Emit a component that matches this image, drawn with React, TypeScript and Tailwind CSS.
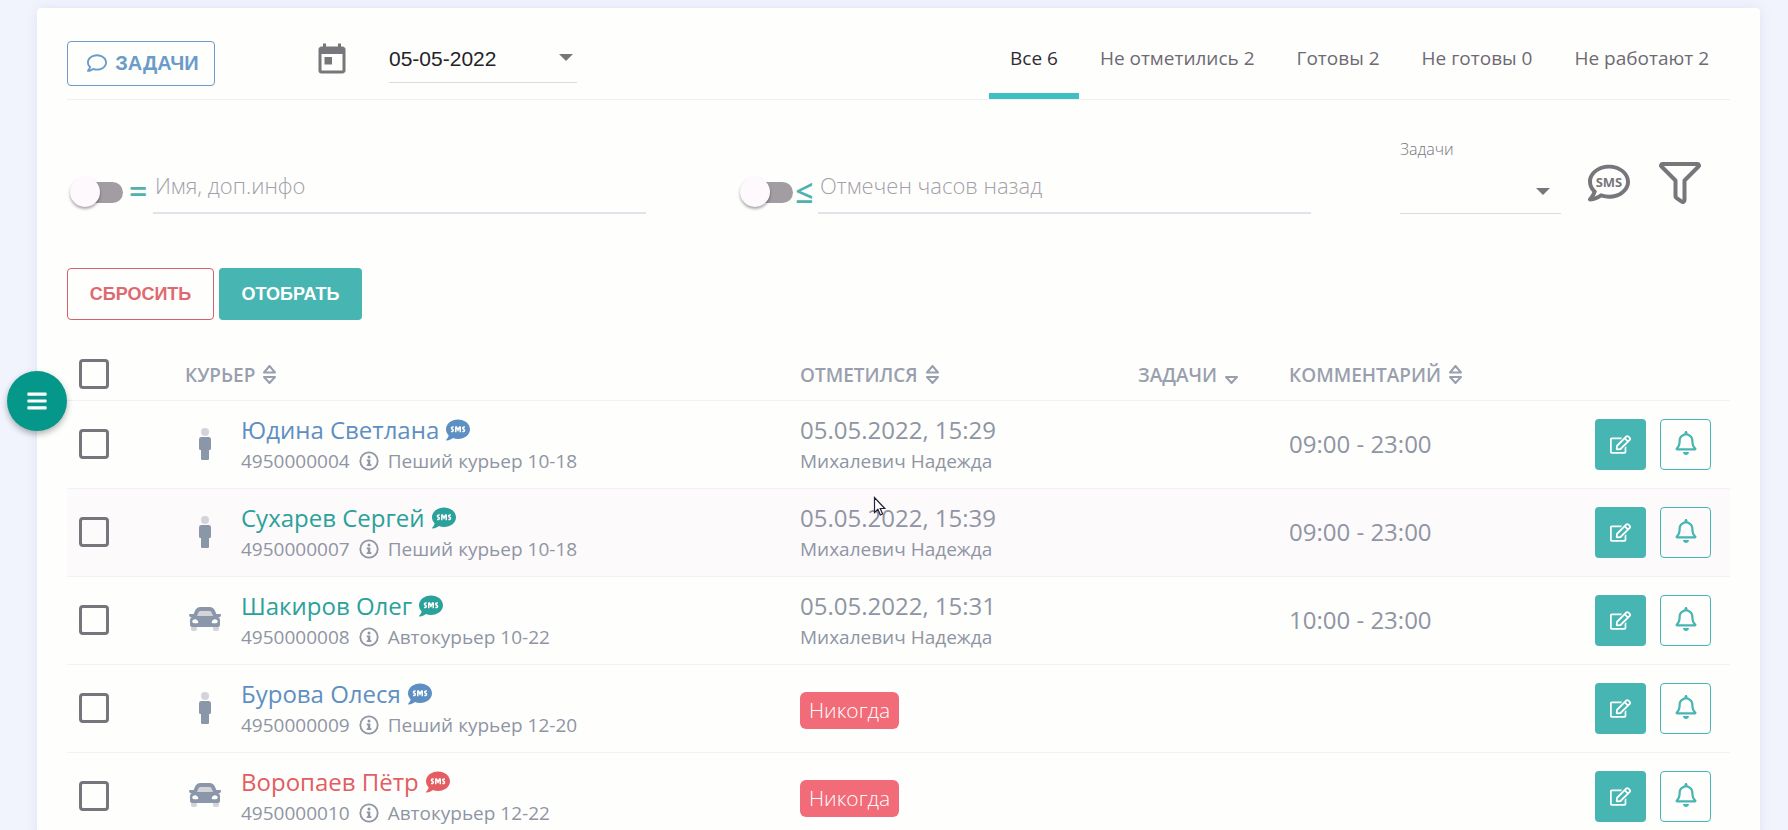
import { useState } from 'react'
import { FaBars, FaRegBell, FaRegComment, FaRegEdit, FaSms } from 'react-icons/fa'
import { MdToday } from 'react-icons/md'

interface Courier {
  name: string
  phone: string
  info: string
  kind: 'walk' | 'car'
  tone: 'blue' | 'teal' | 'red'
  checkedAt?: string
  checkedBy?: string
  comment?: string
}

const couriers: Courier[] = [
  { name: 'Юдина Светлана', phone: '4950000004', info: 'Пеший курьер 10-18', kind: 'walk', tone: 'blue', checkedAt: '05.05.2022, 15:29', checkedBy: 'Михалевич Надежда', comment: '09:00 - 23:00' },
  { name: 'Сухарев Сергей', phone: '4950000007', info: 'Пеший курьер 10-18', kind: 'walk', tone: 'teal', checkedAt: '05.05.2022, 15:39', checkedBy: 'Михалевич Надежда', comment: '09:00 - 23:00' },
  { name: 'Шакиров Олег', phone: '4950000008', info: 'Автокурьер 10-22', kind: 'car', tone: 'teal', checkedAt: '05.05.2022, 15:31', checkedBy: 'Михалевич Надежда', comment: '10:00 - 23:00' },
  { name: 'Бурова Олеся', phone: '4950000009', info: 'Пеший курьер 12-20', kind: 'walk', tone: 'blue' },
  { name: 'Воропаев Пётр', phone: '4950000010', info: 'Автокурьер 12-22', kind: 'car', tone: 'red' },
]

const tabs = ['Все 6', 'Не отметились 2', 'Готовы 2', 'Не готовы 0', 'Не работают 2']

const tones = {
  blue: 'text-[#5e8fc2]',
  teal: 'text-[#2aa19b]',
  red: 'text-[#e35d62]',
}

function Caret({ className }: { className: string }) {
  return (
    <svg className={className} width="14" height="7" viewBox="0 0 14 7" fill="currentColor">
      <path d="M0 0h14L7 7z" />
    </svg>
  )
}

function SortIcon({ single = false }: { single?: boolean }) {
  return (
    <svg width="13" height="19" viewBox="0 0 13 19" fill="none" stroke="currentColor" strokeWidth="2" strokeLinejoin="round">
      {!single && <path d="M1 7.5h11L6.5 1z" />}
      <path d="M1 12h11l-5.5 6z" />
    </svg>
  )
}

function InfoIcon() {
  return (
    <svg width="20" height="20" viewBox="0 0 20 20" fill="none">
      <circle cx="10" cy="10" r="8.7" stroke="currentColor" strokeWidth="1.8" />
      <circle cx="10" cy="5.9" r="1.5" fill="currentColor" />
      <path d="M7.7 8.6h3.6v4.6h1.1v1.7H7.7v-1.7h1.1v-2.9H7.7z" fill="currentColor" />
    </svg>
  )
}

function WalkIcon() {
  return (
    <svg width="32" height="32" viewBox="0 0 32 32">
      <circle cx="16" cy="4" r="4" fill="#d3d3d9" />
      <path d="M12.4 9h7.2a2.4 2.4 0 0 1 2.4 2.4v9a1.6 1.6 0 0 1-1.6 1.6H20v8.8a1.2 1.2 0 0 1-1.2 1.2h-5.6a1.2 1.2 0 0 1-1.2-1.2V22h-.4a1.6 1.6 0 0 1-1.6-1.6v-9A2.4 2.4 0 0 1 12.4 9z" fill="#8997a8" />
    </svg>
  )
}

function CarIcon() {
  return (
    <svg width="32" height="32" viewBox="0 1 32 32">
      <rect x="2" y="23" width="6" height="5" rx="2" fill="#d3d3d9" />
      <rect x="24" y="23" width="6" height="5" rx="2" fill="#d3d3d9" />
      <path d="M8 13l1.4-4.2C10 7.3 11 7 12 7h8c1 0 2 .3 2.6 1.8L24 13z" fill="#d3d3d9" />
      <path
        fillRule="evenodd"
        d="M11.5 4h9a6 6 0 0 1 5.5 3.8L27.3 11H31a1 1 0 0 1 1 1.2l-.4 1a1 1 0 0 1-1 .8h-1.2A4 4 0 0 1 31 17v5a2 2 0 0 1-2 2H3a2 2 0 0 1-2-2v-5a4 4 0 0 1 1.6-3H1.4a1 1 0 0 1-1-.8l-.3-1A1 1 0 0 1 1 11h3.7L6 7.8A6 6 0 0 1 11.5 4zM8 13h16l-1.7-4.1A2 2 0 0 0 20.5 8h-9a2 2 0 0 0-1.8.9zM6.2 16.3c-1.9 0-2.9 1-2.9 2.1S4.3 20.3 6.2 20.3s3.1-.1 3.1-1.1-1.8-2.9-3.1-2.9zm19.6 0c-1.3 0-3.1 1.9-3.1 2.9s1.2 1.1 3.1 1.1 2.9-.8 2.9-1.9-1-2.1-2.9-2.1z"
        fill="#8997a8"
      />
    </svg>
  )
}

function FilterIcon() {
  return (
    <svg width="42" height="42" viewBox="0 0 42 42" fill="none" stroke="currentColor" strokeWidth="4" strokeLinejoin="round">
      <path d="M3.5 2h35c1.3 0 2 1.6 1 2.5L25.5 18.5V38c0 1.5-1.5 2.4-2.7 1.6l-5.5-3.8c-.5-.4-.8-.9-.8-1.5V18.5L2.5 4.5C1.5 3.6 2.2 2 3.5 2z" />
    </svg>
  )
}

function Checkbox({ label }: { label: string }) {
  return (
    <input
      type="checkbox"
      aria-label={label}
      className="block size-[30px] appearance-none rounded-sm border-3 border-[#76757b] checked:bg-[#47b5b1]"
    />
  )
}

function ToggleField({ sign, signClass, placeholder }: { sign: string; signClass: string; placeholder: string }) {
  return (
    <div className="flex items-end">
      <label className="relative mb-[5px] block h-8 w-[56px] shrink-0">
        <input type="checkbox" role="switch" aria-label={placeholder} className="peer sr-only" />
        <span className="absolute top-[5px] left-1 h-[21px] w-[52px] rounded-full bg-[#a29ca3] peer-checked:bg-[#8fd3d0]" />
        <span className="absolute top-0 left-[3px] size-[30px] rounded-full bg-[#fdf9fd] shadow-[0_2px_3px_rgba(0,0,0,0.35)] peer-checked:translate-x-6" />
      </label>
      <span className={`mb-[7px] shrink-0 text-[32px] leading-8 font-semibold text-[#4eb3ae] ${signClass}`}>{sign}</span>
      <input
        type="text"
        aria-label={placeholder}
        placeholder={placeholder}
        className="h-[54px] min-w-0 flex-1 border-b-2 border-[#e3e2ea] bg-transparent px-0.5 pb-0.5 text-[22px] font-light outline-none placeholder:text-[#a3a0a8]"
      />
    </div>
  )
}

function HeadCell({ title, single }: { title: string; single?: boolean }) {
  return (
    <th scope="col" className="px-2.5 text-left font-semibold">
      <button type="button" className="flex items-center gap-2 pt-0.5">
        {title}
        <SortIcon single={single} />
      </button>
    </th>
  )
}

function CourierRow({ courier, active }: { courier: Courier; active: boolean }) {
  return (
    <tr className={`h-[88px] border-t border-[#f2f1f8] ${active ? 'bg-[#fdfafc]' : ''}`}>
      <td className="pl-3">
        <Checkbox label={courier.name} />
      </td>
      <td className="px-2.5">
        <div className="flex items-center gap-5 pl-1">
          {courier.kind === 'walk' ? <WalkIcon /> : <CarIcon />}
          <div className="pt-0.5">
            <div className={`flex items-center gap-[7px] text-2xl leading-8 ${tones[courier.tone]}`}>
              <a href="#">{courier.name}</a>
              <FaSms size={24} />
            </div>
            <div className="flex items-center gap-[9px] text-[19px] leading-[30px]">
              {courier.phone}
              <InfoIcon />
              {courier.info}
            </div>
          </div>
        </div>
      </td>
      <td className="px-2.5">
        {courier.checkedAt ? (
          <div className="pt-0.5">
            <div className="text-2xl leading-8">{courier.checkedAt}</div>
            <div className="text-[19px] leading-[30px]">{courier.checkedBy}</div>
          </div>
        ) : (
          <span className="mt-1 inline-block rounded-md bg-[#f16b78] px-[9px] text-[21px] leading-[37px] font-light text-white">Никогда</span>
        )}
      </td>
      <td />
      <td className="px-2.5 text-2xl">{courier.comment}</td>
      <td>
        <div className="flex gap-3.5 pl-2.5">
          <button type="button" aria-label="Изменить" className="flex size-[51px] items-center justify-center rounded-sm bg-[#47b5b1] text-white">
            <FaRegEdit size={21} />
          </button>
          <button type="button" aria-label="Уведомить" className="flex size-[51px] items-center justify-center rounded-sm border border-[#47b5b1] pb-0.5 text-[#47b5b1]">
            <FaRegBell size={24} />
          </button>
        </div>
      </td>
    </tr>
  )
}

export default function App() {
  const [activeTab, setActiveTab] = useState(0)

  return (
    <div className="relative h-screen overflow-hidden bg-[#f1f4fd] pt-2 pr-7 pl-[37px] font-['Open_Sans',sans-serif] text-[#8f95a3]">
      <main className="min-h-screen rounded-sm bg-[#fefefd] px-[30px] shadow-[0_0_12px_rgba(120,100,170,0.12)]">
        {/* Top bar */}
        <header className="flex h-[92px] items-stretch border-b border-[#f0eff3]">
          <button
            type="button"
            className="mt-[33px] flex h-[45px] w-[148px] items-center justify-center gap-2 rounded-sm border border-[#6b9bc9] pb-0.5 pl-1 font-['Liberation_Sans',Arial,sans-serif] text-xl font-bold text-[#6b9bc9]"
          >
            <FaRegComment size={20} />
            ЗАДАЧИ
          </button>
          <MdToday size={36} className="mt-[34px] ml-[99px] text-[#77767b]" />
          <div className="relative mt-4 ml-[39px] h-[59px] w-[188px]">
            <select
              aria-label="Дата"
              className="size-full appearance-none border-b border-[#dcdbe3] bg-transparent pt-3 font-['Liberation_Sans',Arial,sans-serif] text-[21px] text-[#242328] outline-none"
            >
              <option>05-05-2022</option>
            </select>
            <Caret className="pointer-events-none absolute top-[30px] right-1 text-[#77767b]" />
          </div>
          <nav className="ml-auto flex" role="tablist">
            {tabs.map((tab, i) => (
              <button
                key={tab}
                type="button"
                role="tab"
                aria-selected={i === activeTab}
                onClick={() => setActiveTab(i)}
                className={`border-b-6 px-[21px] pt-4 text-[19px] whitespace-nowrap ${
                  i === activeTab ? 'border-[#3fbfc3] text-[#2f2c36]' : 'border-transparent text-[#6d6a73]'
                }`}
              >
                {tab}
              </button>
            ))}
          </nav>
        </header>

        {/* Filters */}
        <section className="flex h-[114px] items-end">
          <div className="w-[579px]">
            <ToggleField sign="=" signClass="w-[30px] pl-[6px]" placeholder="Имя, доп.инфо" />
          </div>
          <div className="ml-[91px] w-[574px]">
            <ToggleField sign="≤" signClass="w-[25px] pl-[2px]" placeholder="Отмечен часов назад" />
          </div>
          <div className="ml-auto flex">
            <div className="relative w-[161px]">
              <label htmlFor="tasks" className="block text-base leading-[22px] font-light text-[#77747c]">Задачи</label>
              <select id="tasks" className="h-[54px] w-full appearance-none border-b border-[#dcdbe3] bg-transparent outline-none">
                <option />
              </select>
              <Caret className="pointer-events-none absolute top-[50px] right-[11px] text-[#77767b]" />
            </div>
            <button type="button" aria-label="SMS" className="mt-6 ml-[27px] h-[42px] text-[#77767b]">
              <svg width="42" height="42" viewBox="0 0 42 42">
                <FaRegComment size={42} />
                <text x="21" y="25" textAnchor="middle" fontSize="13" fontWeight="700" fontFamily="Open Sans, sans-serif" fill="currentColor">SMS</text>
              </svg>
            </button>
            <button type="button" aria-label="Фильтр" className="mt-6 mr-[29px] ml-[29px] h-[42px] text-[#77767b]">
              <FilterIcon />
            </button>
          </div>
        </section>
        <div className="mt-[54px] flex gap-[5px] font-['Liberation_Sans',Arial,sans-serif] text-lg font-bold">
          <button type="button" className="h-[52px] w-[147px] rounded-sm border border-[#d4616c] text-[#e0696f]">СБРОСИТЬ</button>
          <button type="button" className="h-[52px] w-[143px] rounded-sm bg-[#47b5b1] text-white">ОТОБРАТЬ</button>
        </div>

        {/* Couriers */}
        <table className="mt-7 w-full table-fixed border-collapse">
          <colgroup>
            <col className="w-[108px]" />
            <col className="w-[615px]" />
            <col className="w-[338px]" />
            <col className="w-[151px]" />
            <col />
            <col className="w-[145px]" />
          </colgroup>
          <thead>
            <tr className="h-[52px] text-[19px] text-[#9a9fae]">
              <th scope="col" className="pl-3">
                <Checkbox label="Выбрать всех" />
              </th>
              <HeadCell title="КУРЬЕР" />
              <HeadCell title="ОТМЕТИЛСЯ" />
              <HeadCell title="ЗАДАЧИ" single />
              <HeadCell title="КОММЕНТАРИЙ" />
              <th />
            </tr>
          </thead>
          <tbody>
            {couriers.map((courier, i) => (
              <CourierRow key={courier.phone} courier={courier} active={i === 1} />
            ))}
          </tbody>
        </table>
      </main>

      {/* Menu button over the card edge */}
      <button
        type="button"
        aria-label="Меню"
        className="absolute top-[371px] left-[7px] flex size-[60px] items-center justify-center rounded-full bg-[#059789] text-white shadow-[0_3px_6px_rgba(0,0,0,0.3)]"
      >
        <FaBars size={22} />
      </button>

      {/* Pointer */}
      <svg className="pointer-events-none absolute top-[496px] left-[873px]" width="14" height="21" viewBox="0 0 14 21">
        <path d="M1.5 1.5v15l3.4-3.2 2.4 5.7 2.3-1-2.4-5.5h4.6z" fill="#fff" stroke="#23223a" strokeWidth="1.2" />
      </svg>
    </div>
  )
}
